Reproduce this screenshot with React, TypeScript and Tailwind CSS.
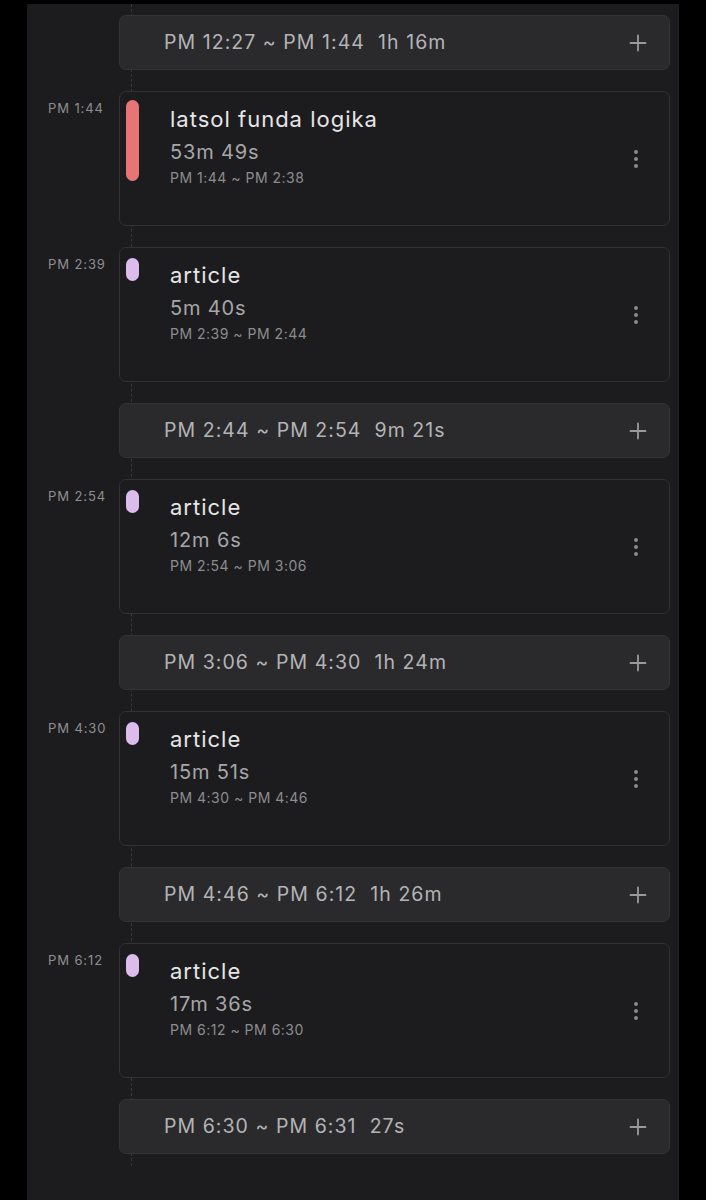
import React from "react";

type Item =
  | { kind: "gap"; text: string; dur: string }
  | { kind: "event"; label: string; title: string; dur: string; range: string; color: string };

const items: Item[] = [
  { kind: "gap", text: "PM 12:27 ~ PM 1:44", dur: "1h 16m" },
  { kind: "event", label: "PM 1:44", title: "latsol funda logika", dur: "53m 49s", range: "PM 1:44 ~ PM 2:38", color: "red" },
  { kind: "event", label: "PM 2:39", title: "article", dur: "5m 40s", range: "PM 2:39 ~ PM 2:44", color: "lav" },
  { kind: "gap", text: "PM 2:44 ~ PM 2:54", dur: "9m 21s" },
  { kind: "event", label: "PM 2:54", title: "article", dur: "12m 6s", range: "PM 2:54 ~ PM 3:06", color: "lav" },
  { kind: "gap", text: "PM 3:06 ~ PM 4:30", dur: "1h 24m" },
  { kind: "event", label: "PM 4:30", title: "article", dur: "15m 51s", range: "PM 4:30 ~ PM 4:46", color: "lav" },
  { kind: "gap", text: "PM 4:46 ~ PM 6:12", dur: "1h 26m" },
  { kind: "event", label: "PM 6:12", title: "article", dur: "17m 36s", range: "PM 6:12 ~ PM 6:30", color: "lav" },
  { kind: "gap", text: "PM 6:30 ~ PM 6:31", dur: "27s" },
];

function Plus() {
  return (
    <svg width="18" height="18" viewBox="0 0 18 18" className="text-[#9a9a9c]">
      <path d="M9 1.5v15M1.5 9h15" stroke="currentColor" strokeWidth="1.8" strokeLinecap="round" />
    </svg>
  );
}

function Dots() {
  return (
    <div className="flex flex-col items-center gap-[3px]">
      <span className="block h-[4px] w-[4px] rounded-full bg-[#8a8a8c]" />
      <span className="block h-[4px] w-[4px] rounded-full bg-[#8a8a8c]" />
      <span className="block h-[4px] w-[4px] rounded-full bg-[#8a8a8c]" />
    </div>
  );
}

export default function App() {
  return (
    <div
      className="min-h-[1200px] w-[706px] bg-black pt-[4px] pl-[27px] pr-[27px]"
      style={{ fontFamily: "Inter, 'Noto Sans', sans-serif" }}
    >
      <div className="relative min-h-[1196px] w-[652px] bg-[#1c1c1e] pt-[11px] pr-[9px]">
        <div className="absolute left-[104px] top-0 h-[1162px] border-l border-dashed border-[#3a3a3c]" />
        <div className="relative flex flex-col gap-[21px]">
          {items.map((it, i) =>
            it.kind === "gap" ? (
              <div key={i} className="flex">
                <div className="w-[92px] shrink-0" />
                <div className="flex h-[55px] flex-1 items-center justify-between rounded-[7px] border border-[#343436] bg-[#2a2a2c] pl-[44px] pr-[22px]">
                  <span className="whitespace-pre text-[19.5px] tracking-[1.05px] text-[#b4b4b6]">
                    {it.text + "  " + it.dur}
                  </span>
                  <Plus />
                </div>
              </div>
            ) : (
              <div key={i} className="flex">
                <div className="w-[92px] shrink-0 pt-[8px] pl-[21px] text-[13px] tracking-[0.9px] text-[#8e8e90]">{it.label}</div>
                <div className="relative flex h-[135px] flex-1 rounded-[7px] border border-[#323234] bg-[#1c1c1e]">
                  <div className="w-[50px] shrink-0 pl-[6px] pt-[8px]">
                    <div
                      className={
                        it.color === "red"
                          ? "h-[81px] w-[13px] rounded-full bg-[#e87575]"
                          : "mt-[2px] h-[23px] w-[13px] rounded-full bg-[#dcbcec]"
                      }
                    />
                  </div>
                  <div className="flex flex-1 flex-col pt-[14px]">
                    <div className="text-[22px] leading-[26px] tracking-[1px] text-[#e6e6e8]">{it.title}</div>
                    <div className="mt-[7px] text-[20px] leading-[26px] tracking-[0.85px] text-[#a6a6a8]">{it.dur}</div>
                    <div className="mt-[3px] text-[14px] leading-[20px] tracking-[0.5px] text-[#8c8c8e]">{it.range}</div>
                  </div>
                  <div className="flex w-[66px] items-center justify-center">
                    <Dots />
                  </div>
                </div>
              </div>
            )
          )}
        </div>
      </div>
    </div>
  );
}
